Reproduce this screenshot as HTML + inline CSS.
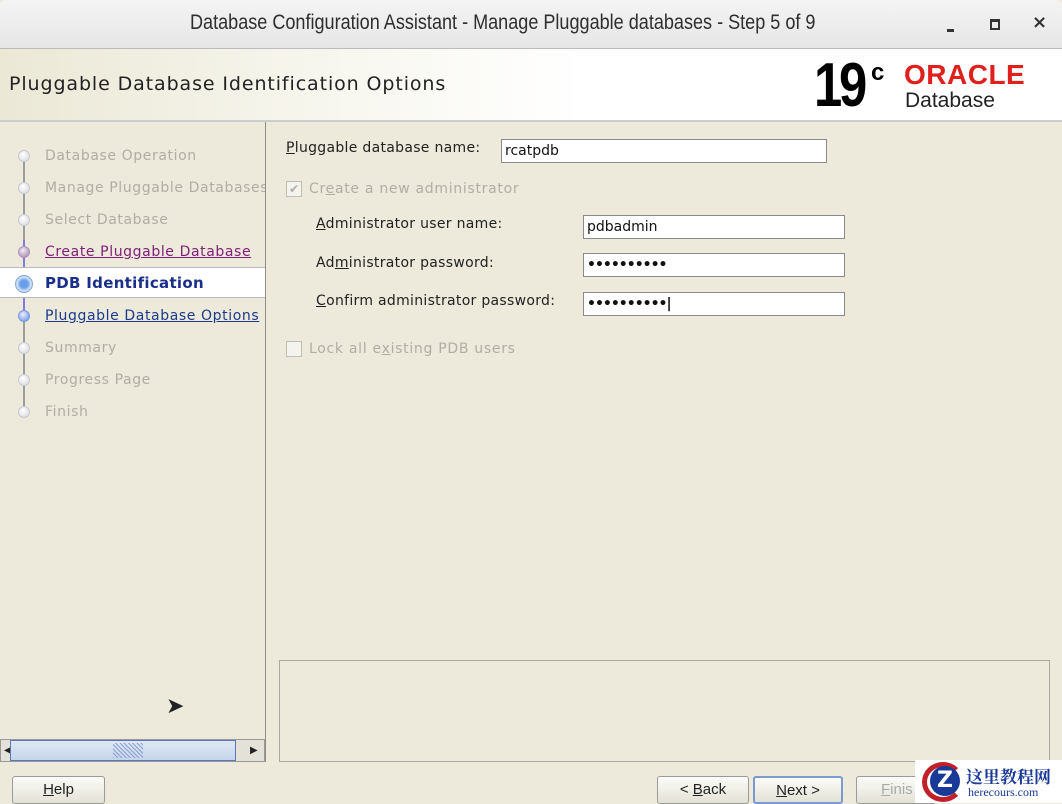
<!DOCTYPE html>
<html><head><meta charset="utf-8"><style>
*{margin:0;padding:0;box-sizing:border-box}
body{width:1062px;height:803px;overflow:hidden;background:#edeadb;font-family:"DejaVu Sans","Liberation Sans",sans-serif;font-size:14px;color:#222;position:relative}
.abs{position:absolute}
#tb{left:0;top:0;width:1062px;height:49px;background:linear-gradient(#f4f4f4,#e6e6e6);border-bottom:1px solid #bbb;border-radius:6px 6px 0 0}
#tb .t{left:190px;top:11px;font-family:"Liberation Sans",sans-serif;font-size:21px;color:#2e2e2e;transform:scaleX(0.86);transform-origin:left;white-space:nowrap}
#hd{left:0;top:49px;width:1062px;height:73px;background:linear-gradient(90deg,#ebe8d6 0%,#f7f6ee 30%,#fff 55%);border-bottom:2px solid #ccc}
.step{left:45px;font-size:14px;color:#b0aea4;letter-spacing:.6px;white-space:nowrap}
.dot{left:18px;width:12px;height:12px;border-radius:50%;background:radial-gradient(circle at 40% 35%,#fff,#d5d5dd);border:1px solid #c8c8d0}
.in{background:#fff;border:1px solid #8a8a8a;height:24px;font-size:14px;padding:3px 3px;color:#111}
.pw{font-size:14px;line-height:16px;letter-spacing:-1px;font-weight:bold}
.lbl{font-size:14px;color:#222;letter-spacing:.3px}
.btn{height:28px;border:1px solid #9a9a9a;border-radius:3px;background:linear-gradient(#fbfbf8,#e4e2d6);font-size:15px;text-align:center;line-height:26px;font-family:"Liberation Sans",sans-serif}
</style></head><body>
<div id="tb" class="abs"><div class="t abs">Database Configuration Assistant - Manage Pluggable databases - Step 5 of 9</div>
<div class="abs" style="left:947px;top:29px;width:7px;height:3px;background:#333"></div>
<div class="abs" style="left:990px;top:19px;width:10px;height:11px;border:2px solid #333;border-top-width:3px"></div>
<div class="abs" style="left:1032px;top:12px;font-size:18px;font-weight:bold;color:#333">×</div>
</div>
<div id="hd" class="abs">
<div class="abs" style="left:9px;top:24px;font-size:19px;color:#222;letter-spacing:.9px">Pluggable Database Identification Options</div>
<div class="abs" style="left:814px;top:4px;font-family:'Liberation Sans';font-weight:bold;font-size:62px;letter-spacing:-4px;line-height:66px;color:#000;transform:scaleX(.82);transform-origin:left">19</div>
<div class="abs" style="left:871px;top:10px;font-family:'Liberation Sans';font-weight:bold;font-size:24px;color:#000">c</div>
<div class="abs" style="left:904px;top:10px;font-family:'Liberation Sans';font-weight:bold;font-size:28px;color:#e0201c;letter-spacing:.5px">ORACLE</div>
<div class="abs" style="left:905px;top:40px;font-family:'Liberation Sans';font-size:21px;color:#222">Database</div>
</div>
<!-- left nav -->
<div class="abs" style="left:265px;top:122px;width:1px;height:640px;background:#8e8c84"></div>
<div class="abs" style="left:23px;top:155px;width:2px;height:100px;background:#a09e98"></div>
<div class="abs" style="left:23px;top:240px;width:2px;height:80px;background:#7d7ce0"></div>
<div class="abs" style="left:23px;top:320px;width:2px;height:92px;background:#a09e98"></div>
<div class="abs" style="left:0;top:267px;width:265px;height:31px;background:#fff;border-top:1px solid #b8b8c8;border-bottom:1px solid #b8b8c8"></div>
<div class="dot abs" style="top:150px"></div><div class="step abs" style="top:148px">Database Operation</div>
<div class="dot abs" style="top:182px"></div><div class="step abs" style="top:180px;width:220px;overflow:hidden">Manage Pluggable Databases</div>
<div class="dot abs" style="top:214px"></div><div class="step abs" style="top:212px">Select Database</div>
<div class="dot abs" style="top:246px;background:radial-gradient(circle at 40% 35%,#eee,#a07ab0);border-color:#b090c0"></div><div class="step abs" style="top:244px;color:#80207a;text-decoration:underline">Create Pluggable Database</div>
<div class="abs" style="left:15px;top:275px;width:18px;height:18px;border-radius:50%;background:radial-gradient(circle,#6aa0e8 35%,#cfe0f8 60%,#9ab8e0);border:1px solid #8aa8d8"></div>
<div class="step abs" style="top:274px;color:#1a2f8a;font-weight:bold;font-size:15px;letter-spacing:.3px">PDB Identification</div>
<div class="dot abs" style="top:310px;background:radial-gradient(circle at 40% 35%,#eef,#5a8ae0);border-color:#7a9ae0"></div><div class="step abs" style="top:308px;color:#1a3a8a;text-decoration:underline">Pluggable Database Options</div>
<div class="dot abs" style="top:342px"></div><div class="step abs" style="top:340px">Summary</div>
<div class="dot abs" style="top:374px"></div><div class="step abs" style="top:372px">Progress Page</div>
<div class="dot abs" style="top:406px"></div><div class="step abs" style="top:404px">Finish</div>
<!-- scrollbar -->
<div class="abs" style="left:0;top:739px;width:265px;height:23px;background:#e4e2d8;border:1px solid #999"></div>
<div class="abs" style="left:4px;top:745px;font-size:10px">◀</div>
<div class="abs" style="left:10px;top:740px;width:226px;height:21px;background:linear-gradient(#dfe8f5,#c5d5ea);border:1px solid #5a78b8"></div>
<div class="abs" style="left:113px;top:743px;width:30px;height:15px;background:repeating-linear-gradient(45deg,#8aa0d0 0 1px,transparent 1px 3px)"></div>
<div class="abs" style="left:250px;top:745px;font-size:10px">▶</div>
<div class="abs" style="left:166px;top:694px;font-size:22px;color:#222">➤</div>
<!-- form -->
<div class="lbl abs" style="left:286px;top:140px"><u>P</u>luggable database name:</div>
<div class="in abs" style="left:501px;top:139px;width:326px">rcatpdb</div>
<div class="abs" style="left:286px;top:181px;width:16px;height:16px;border:1px solid #c0beb4;background:#f4f3ee;color:#b0aea4;font-size:12px;line-height:14px;text-align:center">✔</div>
<div class="lbl abs" style="left:309px;top:181px;color:#b0aea4;letter-spacing:.7px">Cr<u>e</u>ate a new administrator</div>
<div class="lbl abs" style="left:316px;top:216px"><u>A</u>dministrator user name:</div>
<div class="in abs" style="left:583px;top:215px;width:262px">pdbadmin</div>
<div class="lbl abs" style="left:316px;top:255px">Ad<u>m</u>inistrator password:</div>
<div class="in abs pw" style="left:583px;top:253px;width:262px">••••••••••</div>
<div class="lbl abs" style="left:316px;top:293px"><u>C</u>onfirm administrator password:</div>
<div class="in abs pw" style="left:583px;top:292px;width:262px">••••••••••|</div>
<div class="abs" style="left:286px;top:341px;width:16px;height:16px;border:1px solid #c0beb4;background:#f4f3ee"></div>
<div class="lbl abs" style="left:309px;top:341px;color:#b0aea4;letter-spacing:.7px">Lock all e<u>x</u>isting PDB users</div>
<div class="abs" style="left:279px;top:660px;width:771px;height:102px;border:1px solid #aaa8a0;background:#edeadb"></div>
<!-- buttons -->
<div class="btn abs" style="left:12px;top:776px;width:93px"><u>H</u>elp</div>
<div class="btn abs" style="left:657px;top:776px;width:92px">&lt; <u>B</u>ack</div>
<div class="btn abs" style="left:753px;top:776px;width:90px;border:2px solid #7a9ad0"><u>N</u>ext &gt;</div>
<div class="btn abs" style="left:856px;top:776px;width:80px;color:#aaa;text-align:left;padding-left:24px"><u>F</u>inis</div>
<div class="abs" style="left:915px;top:760px;width:147px;height:43px;background:#fff"></div>
<div class="abs" style="left:922px;top:762px;width:42px;height:40px;border-radius:50%;border:5px solid #c0202a;border-right-color:transparent"></div>
<div class="abs" style="left:930px;top:766px;width:30px;height:30px;border-radius:50%;background:#1a3a9a;color:#fff;font-weight:bold;font-size:22px;text-align:center;line-height:30px">Z</div>
<div class="abs" style="left:966px;top:763px;font-family:'Noto Serif CJK SC',serif;font-weight:bold;font-size:17px;color:#1a3a9a">这里教程网</div>
<div class="abs" style="left:968px;top:785px;font-family:'Liberation Serif',serif;font-size:12px;color:#1a3a9a">herecours.com</div>
</body></html>
